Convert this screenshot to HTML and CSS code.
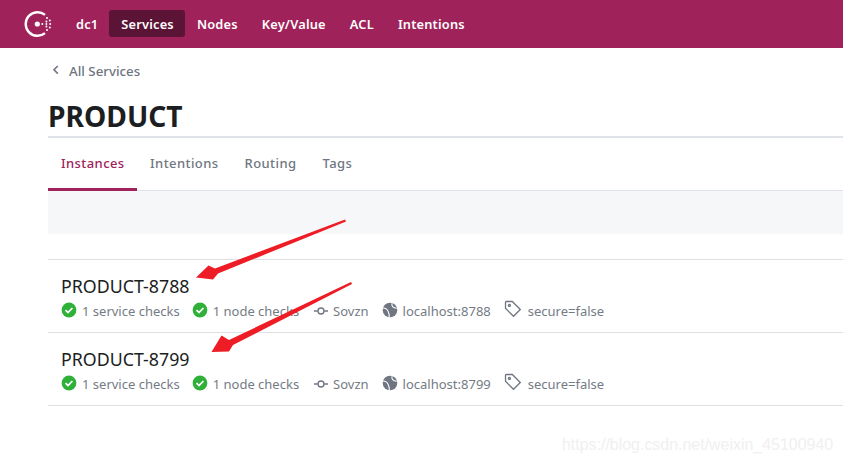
FILE: index.html
```html
<!DOCTYPE html>
<html lang="en">
<head>
<meta charset="utf-8">
<title>PRODUCT - Consul</title>
<link rel="stylesheet" href="styles.css">
</head>
<body>
<header class="topbar">
  <svg class="logo" viewBox="0 0 30 30" width="30" height="30" aria-hidden="true">
    <path class="logo-ring" d="M22 5.9A11.8 11.8 0 1 0 22 24.1"/>
    <circle class="logo-dot" cx="14.3" cy="15" r="2.6"/>
    <g class="logo-dot">
      <circle cx="19.3" cy="15" r="1"/>
      <circle cx="24" cy="9" r="1"/>
      <circle cx="23.4" cy="12.4" r="1"/><circle cx="26.8" cy="11.4" r="1"/>
      <circle cx="23.4" cy="15" r="1"/><circle cx="27.2" cy="15" r="1"/>
      <circle cx="23.4" cy="17.6" r="1"/><circle cx="26.8" cy="18.6" r="1"/>
      <circle cx="24" cy="21" r="1"/>
    </g>
  </svg>
  <nav class="nav">
    <a class="nav-item dc">dc1</a>
    <a class="nav-item active">Services</a>
    <a class="nav-item">Nodes</a>
    <a class="nav-item">Key/Value</a>
    <a class="nav-item">ACL</a>
    <a class="nav-item">Intentions</a>
  </nav>
</header>
<main class="content">
  <div class="crumb">
    <svg class="crumb-icon" viewBox="0 0 8 10" width="8" height="10" aria-hidden="true"><path d="M5.8 1 2 4.8l3.8 3.8"/></svg>
    <span>All Services</span>
  </div>
  <h1 class="title">PRODUCT</h1>
  <div class="tabs">
    <a class="tab current">Instances</a>
    <a class="tab">Intentions</a>
    <a class="tab">Routing</a>
    <a class="tab">Tags</a>
  </div>
  <div class="filter"></div>
  <ul class="list">
    <li class="row">
      <div class="name">PRODUCT-8788</div>
      <div class="meta">
        <span class="item check-a"><svg class="ico" viewBox="0 0 16 16" aria-hidden="true"><circle class="ok" cx="8" cy="8" r="7.4"/><path class="tick" d="M4.5 8.2l2.5 2.4 4.4-4.6"/></svg>1 service checks</span>
        <span class="item check-b"><svg class="ico" viewBox="0 0 16 16" aria-hidden="true"><circle class="ok" cx="8" cy="8" r="7.4"/><path class="tick" d="M4.5 8.2l2.5 2.4 4.4-4.6"/></svg>1 node checks</span>
        <span class="item node"><svg class="ico-node" viewBox="0 0 14 10" aria-hidden="true"><path d="M0 5h3.6M10.4 5H14"/><circle cx="7" cy="5" r="3"/></svg>Sovzn</span>
        <span class="item addr"><svg class="ico" viewBox="0 0 16 16" aria-hidden="true"><circle class="globe" cx="8" cy="8" r="7.3"/><path class="land" d="M1 6C3.8 6.2 5.4 7.4 6 9.2 6.6 11 7.8 12.4 7.2 15.2M10.2 1.2C9 3.6 11 6 14.8 6.2"/></svg>localhost:8788</span>
        <span class="item tag"><svg class="ico-tag" viewBox="0 0 18 18" aria-hidden="true"><path d="M2.4 1.5h5.9l8 8-6.8 6.8-8-8V2.4a.9.9 0 0 1 .9-.9z"/><circle cx="5.4" cy="5.4" r="1"/></svg>secure=false</span>
      </div>
    </li>
    <li class="row">
      <div class="name">PRODUCT-8799</div>
      <div class="meta">
        <span class="item check-a"><svg class="ico" viewBox="0 0 16 16" aria-hidden="true"><circle class="ok" cx="8" cy="8" r="7.4"/><path class="tick" d="M4.5 8.2l2.5 2.4 4.4-4.6"/></svg>1 service checks</span>
        <span class="item check-b"><svg class="ico" viewBox="0 0 16 16" aria-hidden="true"><circle class="ok" cx="8" cy="8" r="7.4"/><path class="tick" d="M4.5 8.2l2.5 2.4 4.4-4.6"/></svg>1 node checks</span>
        <span class="item node"><svg class="ico-node" viewBox="0 0 14 10" aria-hidden="true"><path d="M0 5h3.6M10.4 5H14"/><circle cx="7" cy="5" r="3"/></svg>Sovzn</span>
        <span class="item addr"><svg class="ico" viewBox="0 0 16 16" aria-hidden="true"><circle class="globe" cx="8" cy="8" r="7.3"/><path class="land" d="M1 6C3.8 6.2 5.4 7.4 6 9.2 6.6 11 7.8 12.4 7.2 15.2M10.2 1.2C9 3.6 11 6 14.8 6.2"/></svg>localhost:8799</span>
        <span class="item tag"><svg class="ico-tag" viewBox="0 0 18 18" aria-hidden="true"><path d="M2.4 1.5h5.9l8 8-6.8 6.8-8-8V2.4a.9.9 0 0 1 .9-.9z"/><circle cx="5.4" cy="5.4" r="1"/></svg>secure=false</span>
      </div>
    </li>
  </ul>
</main>
<svg class="arrows" viewBox="0 0 843 463" width="843" height="463" aria-hidden="true">
  <polygon points="345,219.5 346,221.5 218,273.5 213,279.5 196,277.5 208.5,265.5 215,268.5"/>
  <polygon points="351,282 352,284 233,345 229,351.5 211.5,352 221.5,335.5 229,340"/>
</svg>
<div class="watermark">https://blog.csdn.net/weixin_45100940</div>
</body>
</html>
```
FILE: styles.css
```css
* { box-sizing: border-box; }
html, body { margin: 0; padding: 0; }
body {
  position: relative;
  width: 843px;
  height: 463px;
  overflow: hidden;
  background: #fff;
  font-family: "Noto Sans", "Open Sans", sans-serif;
  color: #1f2125;
}
.topbar {
  height: 48px;
  background: #a0225a;
  display: flex;
  align-items: center;
  padding-left: 23px;
}
.logo { display: block; flex: none; }
.logo-ring { fill: none; stroke: #fff; stroke-width: 2.4; }
.logo-dot { fill: #fff; }
.nav { display: flex; align-items: center; margin-left: 13px; margin-top: -1px; }
.nav-item {
  color: #fff;
  font-size: 12.8px;
  font-weight: 600;
  line-height: 26px;
  height: 27px;
  padding: 1px 12px 0;
  border-radius: 3px;
  white-space: nowrap;
  letter-spacing: .2px;
}
.nav-item.dc { padding: 1px 11px 0 10px; }
.nav-item.active { background: #5b1436; padding: 1px 11px 0 12px; }
.content { padding-left: 48px; }
.crumb {
  display: flex;
  align-items: center;
  height: 46px;
  padding-left: 4px;
  font-size: 13.3px;
  font-weight: 500;
  color: #6e7480;
}
.crumb span { margin-left: 9px; }
.crumb-icon { fill: none; stroke: #6e7480; stroke-width: 1.6; margin-top: -3px; }
.title {
  margin: 0;
  height: 44px;
  font-size: 28.2px;
  font-weight: 700;
  line-height: 44px;
  color: #1c1e22;
  border-bottom: 2px solid #dfe3e8;
}
.tabs {
  display: flex;
  height: 53px;
  border-bottom: 1px solid #dfe2ea;
}
.tab {
  font-size: 13px;
  font-weight: 500;
  line-height: 50px;
  height: 53px;
  padding: 0 13px;
  color: #70767f;
  letter-spacing: .42px;
}
.tab.current {
  color: #a0225a;
  border-bottom: 3px solid #a0225a;
  padding: 0 12.5px 0 13px;
}
.filter { height: 43px; background: #f6f7f9; }
.list {
  list-style: none;
  margin: 25px 0 0;
  padding: 0;
  border-top: 1px solid #dfe0e6;
}
.row {
  height: 73px;
  padding: 14px 13px 0;
  border-bottom: 1px solid #dfe0e6;
}
.name {
  font-size: 17.8px;
  line-height: 24px;
  color: #1c1e22;
}
.meta {
  display: flex;
  align-items: center;
  height: 20px;
  margin-top: 3px;
  font-size: 13px;
  color: #757b85;
}
.item { display: flex; align-items: center; white-space: nowrap; }
.ico { width: 16px; height: 16px; flex: none; margin-right: 5px; margin-top: -3px; }
.ok { fill: #2eb039; }
.tick { fill: none; stroke: #fff; stroke-width: 1.8; }
.globe { fill: #6f7682; }
.land { fill: none; stroke: #fff; stroke-width: 1.1; }
.check-b { margin-left: 12px; }
.node { margin-left: 15px; }
.ico-node { width: 14px; height: 10px; margin-right: 5px; fill: none; stroke: #6f7682; stroke-width: 1.4; }
.addr { margin-left: 13px; }
.tag { margin-left: 13px; }
.ico-tag { width: 18px; height: 18px; margin-right: 6px; margin-top: -4px; fill: none; stroke: #6f7682; stroke-width: 1.3; }
.arrows { position: absolute; left: 0; top: 0; fill: #ee1c25; pointer-events: none; }
.watermark {
  position: absolute;
  left: 562px;
  top: 435px;
  font-family: "Liberation Sans", sans-serif;
  font-size: 15.95px;
  line-height: 20px;
  color: #f0f0f0;
  white-space: nowrap;
}
```
